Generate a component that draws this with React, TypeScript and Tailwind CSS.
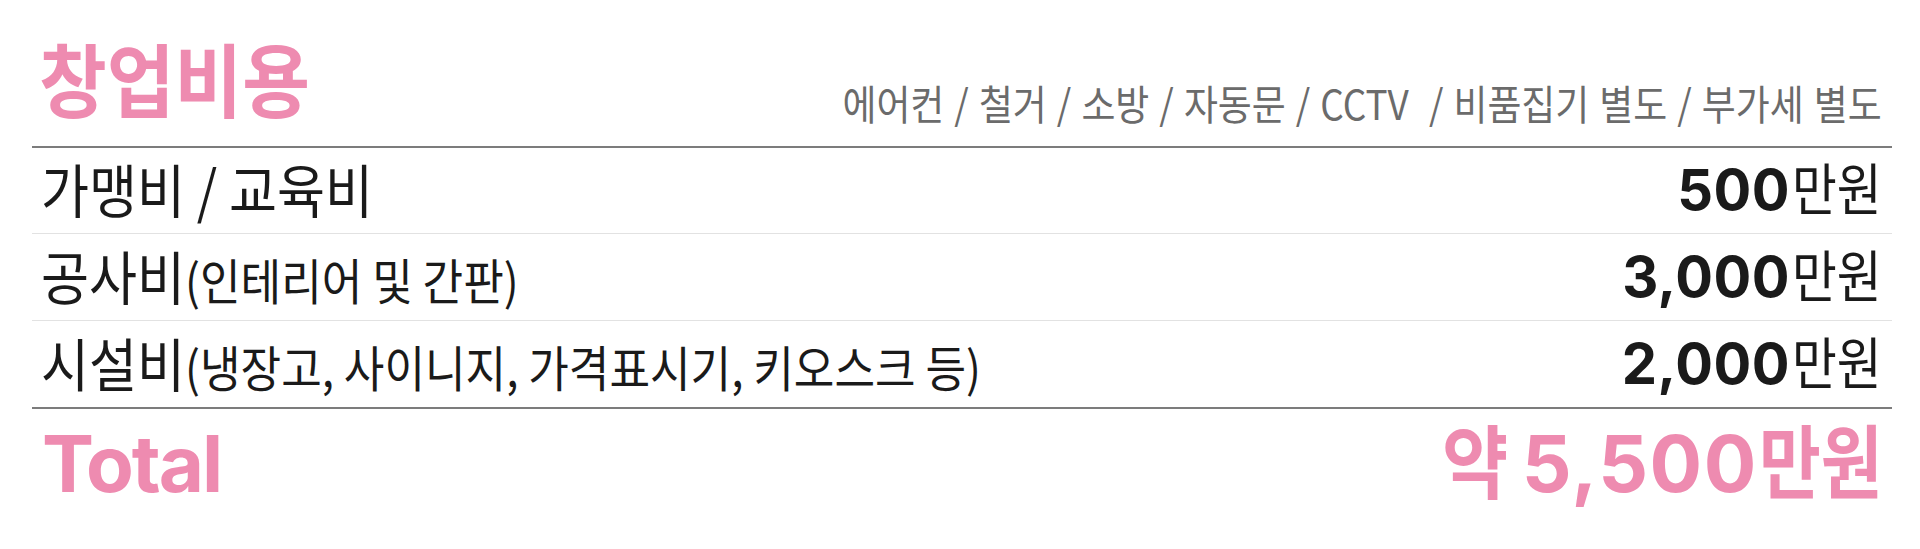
import React from "react";

const rows = [
  {
    main: "가맹비 / 교육비",
    paren: "",
    num: "500",
    cls: "h-[86px] border-b border-[#e2e2e2]",
  },
  {
    main: "공사비",
    paren: "(인테리어 및 간판)",
    num: "3,000",
    cls: "h-[87px] border-b border-[#e2e2e2]",
  },
  {
    main: "시설비",
    paren: "(냉장고, 사이니지, 가격표시기, 키오스크 등)",
    num: "2,000",
    cls: "h-[88px] border-b-2 border-[#7c7c7c]",
  },
];

export default function App() {
  return (
    <div className="w-[1920px] h-[549px] bg-white pl-8 pr-[28px] font-['Noto_Sans_CJK_KR',sans-serif] text-[#1a1a1a] overflow-hidden">
      <div className="h-[146px] flex items-end justify-between pl-[7px] pr-[10px]">
        <h1 className="mb-[30px] text-[80px] leading-none font-bold text-[#ee8bb0] inline-block origin-left scale-x-[0.92] whitespace-nowrap">
          창업비용
        </h1>
        <p className="mb-[23px] text-[41px] leading-none text-[#6b6b6b] inline-block origin-right scale-x-[0.9] whitespace-pre [word-spacing:2px]">
          {"에어컨 / 철거 / 소방 / 자동문 / CCTV  / 비품집기 별도 / 부가세 별도"}
        </p>
      </div>
      <div className="border-t-2 border-[#7c7c7c]">
        {rows.map((r) => (
          <div
            key={r.num}
            className={"flex items-center justify-between pl-[9px] pr-[12px] pb-[5px] " + r.cls}
          >
            <span className="inline-block origin-left scale-x-[0.9] whitespace-nowrap leading-none text-[58px]">
              {r.main}
              {r.paren && <span className="text-[49px]">{r.paren}</span>}
            </span>
            <span className="flex items-baseline leading-none">
              <span className="font-['Inter',sans-serif] font-bold text-[56px] tracking-[0.5px]">
                {r.num}
              </span>
              <span className="ml-[2px] inline-block origin-left scale-x-[0.87] -mr-[15px] text-[56px]">
                만원
              </span>
            </span>
          </div>
        ))}
      </div>
      <div className="pt-[8px] flex items-baseline justify-between pl-[10px] pr-[12px] text-[#ee8bb0] leading-none">
        <span className="font-['Inter',sans-serif] font-bold text-[78px] tracking-[-2px]">Total</span>
        <span className="flex items-baseline">
          <span className="inline-block origin-left scale-x-[0.9] -mr-[8px] font-bold text-[80px]">
            약
          </span>
          <span className="ml-[14px] font-['Inter',sans-serif] font-bold text-[78px] tracking-[1.5px]">
            5,500
          </span>
          <span className="ml-[1px] inline-block origin-left scale-x-[0.84] -mr-[26px] font-bold text-[80px]">
            만원
          </span>
        </span>
      </div>
    </div>
  );
}
